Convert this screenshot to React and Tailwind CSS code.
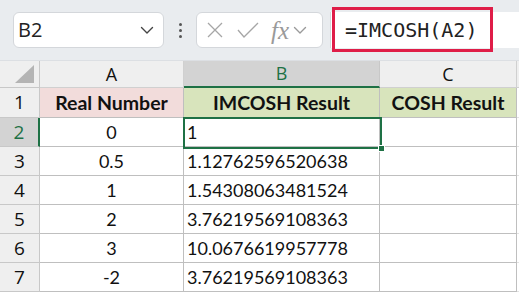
import React from 'react';

const rows = [
  { n: 2, a: '0', b: '1' },
  { n: 3, a: '0.5', b: '1.12762596520638' },
  { n: 4, a: '1', b: '1.54308063481524' },
  { n: 5, a: '2', b: '3.76219569108363' },
  { n: 6, a: '3', b: '10.0676619957778' },
  { n: 7, a: '-2', b: '3.76219569108363' },
];

const Chevron = ({ className }) => (
  <svg className={className} width="14" height="9" viewBox="0 0 14 9" fill="none">
    <path d="M1.5 1.5 L7 7 L12.5 1.5" stroke="currentColor" strokeWidth="1.4" strokeLinecap="round" strokeLinejoin="round" />
  </svg>
);

const Toolbar = () => (
  <div className="h-[61px] bg-[#e9ecef] border-b border-[#dcdfe3] flex items-center pl-[13px] relative">
    <div className="w-[151px] h-[36px] bg-white border border-[#d4d7db] rounded-[6px] flex items-center justify-between pl-[4px] pr-[9px]">
      <span className="text-[20px] text-[#222] leading-none" style={{ fontFamily: '"Open Sans", sans-serif' }}>B2</span>
      <Chevron className="text-[#444]" />
    </div>
    <div className="w-[32px] flex flex-col items-center gap-[3px]">
      <span className="w-[3px] h-[3px] rounded-full bg-[#555]" />
      <span className="w-[3px] h-[3px] rounded-full bg-[#555]" />
      <span className="w-[3px] h-[3px] rounded-full bg-[#555]" />
    </div>
    <div className="w-[127px] h-[36px] bg-white border border-[#d4d7db] rounded-[6px] flex items-center pl-[10px] text-[#a6a6a6]">
      <svg width="16" height="16" viewBox="0 0 16 16" fill="none">
        <path d="M1 1 L15 15 M15 1 L1 15" stroke="currentColor" strokeWidth="1.3" />
      </svg>
      <svg className="ml-[14px]" width="22" height="16" viewBox="0 0 22 16" fill="none">
        <path d="M1 8 L7 15 L21 1" stroke="currentColor" strokeWidth="1.3" />
      </svg>
      <span className="ml-[12px] text-[25px] italic leading-none text-[#9a9a9a]" style={{ fontFamily: '"Liberation Serif", serif' }}>fx</span>
      <Chevron className="ml-[4px] text-[#9a9a9a]" />
    </div>
    <div className="ml-[7px] flex-1 h-[36px] bg-white border-l border-[#d4d7db] flex items-center pl-[14px]">
      <span className="text-[20px] text-[#222] leading-none" style={{ fontFamily: '"DejaVu Sans Mono", monospace' }}>=IMCOSH(A2)</span>
    </div>
    <div className="absolute left-[332px] top-[7px] w-[161px] h-[45px] border-[3px] border-[#df1d48] pointer-events-none" />
  </div>
);

const cellFont = { fontFamily: 'Lato, "Liberation Sans", sans-serif' };
const headFont = { fontFamily: '"Open Sans", "Liberation Sans", sans-serif' };

export default function App() {
  return (
    <div className="w-[519px] h-[298px] bg-white overflow-hidden">
      <Toolbar />
      <div className="relative">
        <div className="grid grid-cols-[40px_144px_196px_137px_2px] grid-rows-[27px_30px_repeat(6,29px)] text-[#111]">
          {/* column headers */}
          <div className="bg-[#efefef] border-r border-b border-[#c8c8c8] relative">
            <div className="absolute right-[5px] bottom-[4px] w-0 h-0 border-l-[19px] border-l-transparent border-b-[18px] border-b-[#b4b4b4]" />
          </div>
          <div className="bg-[#efefef] border-r border-b border-[#d0d0d0] flex items-center justify-center text-[18px]" style={headFont}>A</div>
          <div className="bg-[#d3d3d3] border-r border-[#c8c8c8] border-b-2 border-b-[#1e7145] flex items-center justify-center text-[18px] text-[#1e7145]" style={headFont}>B</div>
          <div className="bg-[#efefef] border-r border-b border-[#d0d0d0] flex items-center justify-center text-[18px]" style={headFont}>C</div>
          <div className="bg-[#efefef] border-b border-[#d0d0d0]" />

          {/* row 1 */}
          <div className="bg-[#efefef] border-r border-b border-[#c8c8c8] flex items-center justify-center text-[19px]" style={headFont}>1</div>
          <div className="bg-[#f2dcdb] border-r border-b border-[#bfbfbf] flex items-center justify-center text-[19.5px] font-bold" style={cellFont}>Real Number</div>
          <div className="bg-[#d8e4bc] border-r border-b border-[#bfbfbf] flex items-center justify-center text-[19.5px] font-bold" style={cellFont}>IMCOSH Result</div>
          <div className="bg-[#d8e4bc] border-r border-b border-[#bfbfbf] flex items-center justify-center text-[19.5px] font-bold" style={cellFont}>COSH Result</div>
          <div className="border-b border-[#e2e2e2]" />

          {rows.map((r) => (
            <React.Fragment key={r.n}>
              <div
                className={
                  r.n === 2
                    ? 'bg-[#d3d3d3] border-r-2 border-r-[#1e7145] border-b border-b-[#c8c8c8] flex items-center justify-center text-[19px] text-[#1e7145]'
                    : 'bg-[#efefef] border-r border-b border-[#c8c8c8] flex items-center justify-center text-[19px]'
                }
                style={headFont}
              >
                {r.n}
              </div>
              <div className="border-r border-b border-[#bfbfbf] flex items-center justify-center text-[18px]" style={cellFont}>{r.a}</div>
              <div className="border-r border-b border-[#bfbfbf] flex items-center pl-[3px] text-[18px]" style={cellFont}>{r.b}</div>
              <div className="border-r border-b border-[#bfbfbf]" />
              <div className="border-b border-[#e2e2e2]" />
            </React.Fragment>
          ))}
        </div>
        {/* active cell B2 */}
        <div className="absolute left-[183px] top-[56px] w-[199px] h-[32px] border-2 border-[#1e7145] pointer-events-none">
          <div className="absolute right-[-5px] bottom-[-5px] w-[7px] h-[7px] bg-[#1e7145] border border-white" />
        </div>
      </div>
    </div>
  );
}
